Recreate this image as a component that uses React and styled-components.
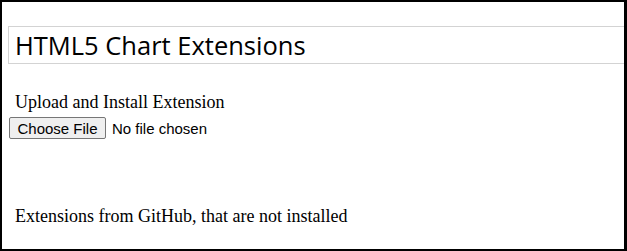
import styled, { createGlobalStyle } from 'styled-components';

const GlobalStyle = createGlobalStyle`
	html, body {
		margin: 0;
		padding: 0;
		background: #fff;
	}
`;

const Frame = styled.div`
	box-sizing: border-box;
	width: 627px;
	height: 251px;
	border: 2px solid #000;
	border-right-width: 3px;
	overflow: hidden;
	padding: 24px 0 0 6px;
	font-family: 'Liberation Serif', 'Times New Roman', serif;
	color: #000;
`;

const TitleBox = styled.div`
	box-sizing: border-box;
	width: 640px;
	height: 38px;
	border: 1px solid #d3d3d3;
	padding: 0 0 0 6px;
	display: flex;
	align-items: center;
`;

const Title = styled.h1`
	margin: 0;
	font-family: 'Segoe UI', 'Open Sans', 'DejaVu Sans', sans-serif;
	font-weight: 400;
	font-size: 25.5px;
	line-height: 30px;
	color: #000;
`;

const SectionLabel = styled.p`
	margin: ${({ $top }) => $top}px 0 0 7px;
	font-size: 18px;
	line-height: 20px;
`;

const FileRow = styled.div`
	display: flex;
	align-items: center;
	margin: 5px 0 0 1px;
	font-family: 'Liberation Sans', Arial, sans-serif;
	font-size: 15px;
`;

const FileButton = styled.button`
	box-sizing: border-box;
	width: 97px;
	height: 22px;
	padding: 0;
	border: 1px solid #767676;
	border-radius: 2px;
	background: #efefef;
	font-family: 'Liberation Sans', Arial, sans-serif;
	font-size: 15px;
	color: #000;
`;

const FileStatus = styled.span`
	margin-left: 6px;
	font-size: 15px;
`;

export default function App() {
	return (
		<>
			<GlobalStyle />
			<Frame>
				<TitleBox>
					<Title>HTML5 Chart Extensions</Title>
				</TitleBox>
				<SectionLabel $top={28}>Upload and Install Extension</SectionLabel>
				<FileRow>
					<FileButton type="button">Choose File</FileButton>
					<FileStatus>No file chosen</FileStatus>
				</FileRow>
				<SectionLabel $top={67}>Extensions from GitHub, that are not installed</SectionLabel>
			</Frame>
		</>
	);
}
